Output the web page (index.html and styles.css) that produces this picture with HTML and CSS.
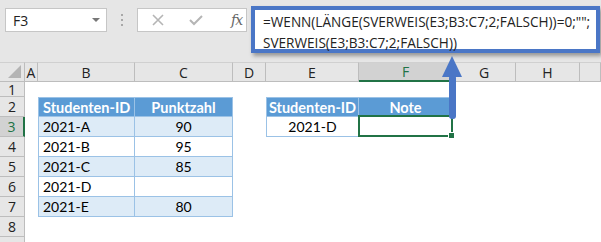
FILE: index.html
```html
<!DOCTYPE html>
<html lang="de">
<head>
<meta charset="utf-8">
<title>Excel</title>
<link rel="stylesheet" href="styles.css">
</head>
<body>
<div class="app">
  <div class="topbar">
    <div class="namebox"><span>F3</span><span class="dd"></span></div>
    <div class="grip"><i></i><i></i><i></i></div>
    <div class="fbtns">
      <svg class="ico" width="14" height="14" viewBox="0 0 14 14"><path d="M2 2 L12 12 M12 2 L2 12" stroke="#b5b5b5" stroke-width="1.6" fill="none"/></svg>
      <svg class="ico" width="16" height="14" viewBox="0 0 16 14"><path d="M2 7 L6 11 L14 3" stroke="#b5b5b5" stroke-width="2" fill="none"/></svg>
      <span class="fx">fx</span>
    </div>
    <div class="formula">=WENN(LÄNGE(SVERWEIS(E3;B3:C7;2;FALSCH))=0;"";<br>SVERWEIS(E3;B3:C7;2;FALSCH))</div>
  </div>
  <div class="sheet">
    <div class="ch corner"><svg width="13" height="13" viewBox="0 0 13 13"><polygon points="13,0 13,13 0,13" fill="#b4b4b4"/></svg></div>
    <div class="ch">A</div><div class="ch">B</div><div class="ch">C</div><div class="ch">D</div><div class="ch">E</div><div class="ch sel">F</div><div class="ch">G</div><div class="ch">H</div><div class="ch"></div>

    <div class="rh">1</div><div></div><div></div><div></div><div></div><div></div><div></div><div></div><div></div><div></div>

    <div class="rh">2</div><div></div><div class="th left first top">Studenten-ID</div><div class="th top">Punktzahl</div><div></div><div class="th first top">Studenten-ID</div><div class="th top">Note</div><div></div><div></div><div></div>

    <div class="rh rsel">3</div><div></div><div class="td band left first">2021-A</div><div class="td band">90</div><div></div><div class="td first">2021-D</div><div class="td active"></div><div></div><div></div><div></div>

    <div class="rh">4</div><div></div><div class="td left first">2021-B</div><div class="td">95</div><div></div><div></div><div></div><div></div><div></div><div></div>

    <div class="rh">5</div><div></div><div class="td band left first">2021-C</div><div class="td band">85</div><div></div><div></div><div></div><div></div><div></div><div></div>

    <div class="rh">6</div><div></div><div class="td left first">2021-D</div><div class="td"></div><div></div><div></div><div></div><div></div><div></div><div></div>

    <div class="rh">7</div><div></div><div class="td band left first">2021-E</div><div class="td band">80</div><div></div><div></div><div></div><div></div><div></div><div></div>

    <div class="rh">8</div><div></div><div></div><div></div><div></div><div></div><div></div><div></div><div></div><div></div>

    <div class="rh"></div><div></div><div></div><div></div><div></div><div></div><div></div><div></div><div></div><div></div>
  </div>
  <svg class="arrow" width="26" height="68" viewBox="0 0 26 68">
    <polygon points="12,1 2,22 22,22" fill="#4a76c6"/>
    <rect x="9" y="20" width="7" height="44" rx="3" fill="#4a76c6"/>
  </svg>
</div>
</body>
</html>
```
FILE: styles.css
```css
* { box-sizing: border-box; }
html, body { margin: 0; padding: 0; background: #fff; }
body { width: 601px; height: 242px; overflow: hidden; font-family: "Open Sans", "DejaVu Sans", sans-serif; }
.app { position: relative; width: 601px; height: 242px; overflow: hidden; }

.topbar {
  height: 62px;
  background: #e6e6e6;
  display: flex;
  align-items: flex-start;
}
.namebox {
  margin: 8px 0 0 5px;
  width: 102px;
  height: 24px;
  background: #fff;
  border: 1px solid #c6c6c6;
  display: flex;
  align-items: center;
  justify-content: space-between;
  padding: 0 6px 0 7px;
  font-size: 14px;
  color: #222;
}
.dd {
  width: 0; height: 0;
  border-left: 4px solid transparent;
  border-right: 4px solid transparent;
  border-top: 4px solid #777;
}
.grip {
  width: 30px;
  margin-top: 14px;
  display: flex;
  flex-direction: column;
  align-items: center;
  gap: 3px;
}
.grip i { display: block; width: 2px; height: 2px; background: #a8a8a8; }
.fbtns {
  margin-top: 8px;
  width: 110px;
  height: 24px;
  background: #fff;
  border: 1px solid #c6c6c6;
  display: flex;
  align-items: center;
  padding-left: 13px;
  gap: 23px;
}
.fx {
  font-family: "DejaVu Serif", "Liberation Serif", serif;
  font-style: italic;
  font-size: 14px;
  color: #666;
  margin-left: 4px;
  letter-spacing: -1px;
}
.formula {
  margin: 6px 0 0 4px;
  width: 349px;
  height: 47px;
  background: #fff;
  border: 4px solid #4a76c6;
  box-shadow: 2px 3px 4px rgba(0,0,0,0.35);
  padding: 1px 0 0 8px;
  font-size: 13.6px;
  line-height: 21px;
  color: #222;
  white-space: nowrap;
}

.sheet {
  display: grid;
  grid-template-columns: 25px 13px 97px 98px 33px 93px 94px 63px 64px 21px;
  grid-template-rows: 20px 15px repeat(8, 20px);
  font-family: "Lato", "Liberation Sans", sans-serif;
  font-size: 14px;
  color: #000;
}
.ch {
  background: #e6e6e6;
  border-right: 1px solid #bdbdbd;
  border-bottom: 1px solid #bdbdbd;
  border-top: 1px solid #d0d0d0;
  font-family: "Open Sans", sans-serif;
  font-size: 14px;
  color: #222;
  display: flex;
  align-items: center;
  justify-content: center;
}
.ch.corner { justify-content: flex-end; align-items: flex-end; padding: 0 3px 3px 0; }
.ch.sel { background: #d2d2d2; color: #217346; border-bottom: 2px solid #217346; }
.rh {
  background: #e6e6e6;
  border-right: 1px solid #bdbdbd;
  border-bottom: 1px solid #bdbdbd;
  font-family: "Open Sans", sans-serif;
  font-size: 14px;
  color: #222;
  display: flex;
  align-items: center;
  justify-content: center;
}
.rh.rsel { background: #d2d2d2; color: #217346; border-right: 2px solid #217346; }

.th, .td {
  display: flex;
  align-items: center;
  justify-content: center;
  border-right: 1px solid #9bc2e6;
  border-bottom: 1px solid #9bc2e6;
  white-space: nowrap;
}
.th { background: #5b9bd5; color: #fff; font-weight: bold; font-size: 14.5px; }
.td { background: #fff; }
.td.band { background: #ddebf7; }
.left { justify-content: flex-start; padding-left: 4px; }
.first { border-left: 1px solid #9bc2e6; }
.top { border-top: 1px solid #9bc2e6; }
.td.active { position: relative; }
.td.active::before {
  content: "";
  position: absolute;
  left: -1px; top: -2px; right: -1px; bottom: -1px;
  border: 2px solid #217346;
}
.td.active::after {
  content: "";
  position: absolute;
  right: -3px; bottom: -3px;
  width: 5px; height: 5px;
  background: #217346;
  border: 1px solid #fff;
}

.arrow { position: absolute; left: 440px; top: 55px; }
```
